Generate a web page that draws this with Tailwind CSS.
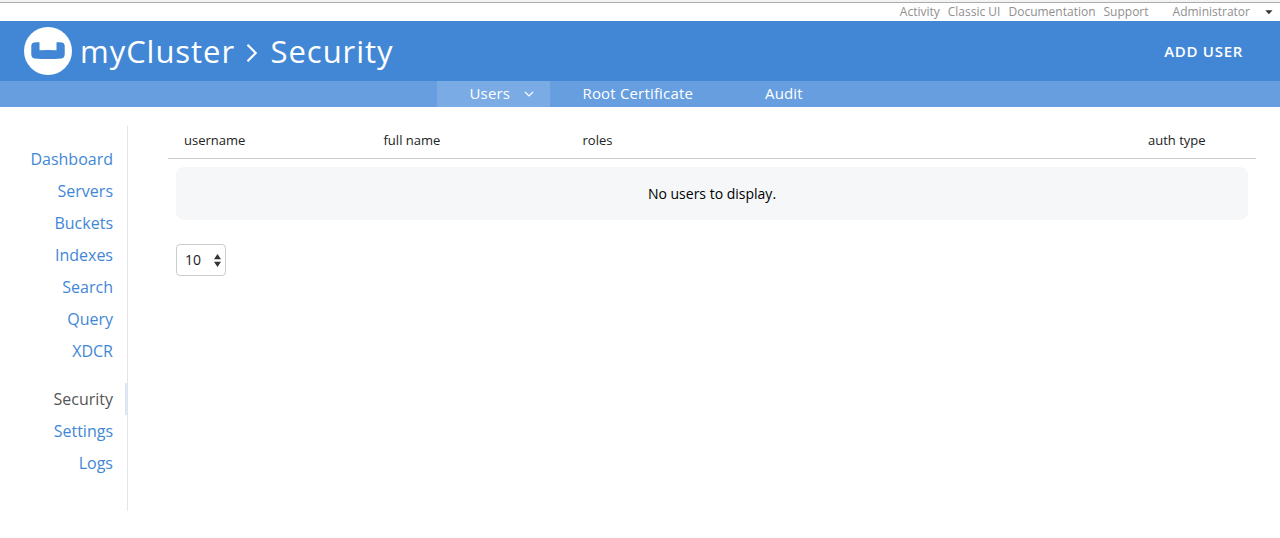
<!DOCTYPE html>
<html lang="en">
<head>
<meta charset="utf-8">
<title>myCluster - Security</title>
<script src="https://cdn.jsdelivr.net/npm/@tailwindcss/browser@4"></script>
</head>
<body class="h-[538px] overflow-hidden bg-white font-['Open_Sans','Noto_Sans',sans-serif] text-[#333]">
<div class="h-[3px] border-b border-[#aaadad] bg-[#f3f3f3]"></div>
<div class="flex h-[18px] items-center justify-end pr-[7px] text-xs leading-[18px] text-[#8f8f8f]">
  <nav class="flex gap-2"><a>Activity</a><a>Classic UI</a><a>Documentation</a><a>Support</a></nav>
  <a class="ml-6">Administrator</a>
  <svg class="ml-[15px] h-[5px] w-2" viewBox="0 0 8 5"><path d="M.3 .2h7.200L3.900 4.300z" fill="#333"/></svg>
</div>
<header class="flex h-[60px] items-center bg-[#4287d6] pl-6 pr-[37px] text-white">
  <svg class="size-12 shrink-0" viewBox="0 0 48 48"><circle cx="24" cy="24" r="24" fill="#fff"/><path d="M9.800 15.500Q12.500 15 15.500 15.300V23.200Q24 22.600 32.500 23.200V15.300Q35.500 15 38.200 15.500Q40.500 16 40.700 18.500V27.500Q40.500 30.800 37.500 31.500Q24 32.500 10.500 31.500Q7.500 30.800 7.300 27.500V18.500Q7.500 16 9.800 15.500Z" fill="#4287d6"/></svg>
  <h1 class="ml-2 flex items-center text-[31px] font-normal leading-[60px] tracking-[0.95px]"><span>myCluster</span>
    <svg class="ml-[11px] mr-[12.500px] mt-[3px] h-5 w-3" viewBox="0 0 12 20" fill="none" stroke="#fff" stroke-width="2.200"><path d="M1.500 1.800 9.700 10l-8.200 8.200"/></svg>
    <span>Security</span></h1>
  <button class="ml-auto text-[15px] font-semibold tracking-[0.7px]">ADD USER</button>
</header>
<nav class="flex h-[26px] bg-[#679edf] pl-[437px] text-[15px] leading-[24px] tracking-[0.17px] text-white">
  <a class="flex w-[113px] bg-[#7aabe4] pl-[32.500px]"><span>Users</span><svg class="ml-[14px] mt-[10px] h-[6px] w-[10px]" viewBox="0 0 10 6" fill="none" stroke="#fff" stroke-width="1.200"><path d="M1 1l4 4 4-4"/></svg></a>
  <a class="w-[182px] pl-[32.500px]">Root Certificate</a>
  <a class="pl-[33px]">Audit</a>
</nav>
<div class="flex pt-[19px]">
  <aside class="flex h-[385px] w-32 flex-col border-r border-[#e6e6e8] pt-[17px] text-right text-base leading-8 text-[#4287d6]">
    <a class="pr-[14px]">Dashboard</a>
    <a class="pr-[14px]">Servers</a>
    <a class="pr-[14px]">Buckets</a>
    <a class="pr-[14px]">Indexes</a>
    <a class="pr-[14px]">Search</a>
    <a class="pr-[14px]">Query</a>
    <a class="pr-[14px]">XDCR</a>
    <a class="mt-4 border-r-2 border-[#d9e7f7] pr-3 text-[#555]">Security</a>
    <a class="pr-[14px]">Settings</a>
    <a class="pr-[14px]">Logs</a>
  </aside>
  <main class="ml-10 w-[1088px]">
    <div class="flex h-[33px] border-b border-[#ccc] pl-4 text-[13px] leading-[29px] text-[#222]">
      <div class="w-[199.500px]">username</div><div class="w-[199px]">full name</div><div class="w-[565.500px]">roles</div><div>auth type</div>
    </div>
    <div class="mx-2 mt-2 h-[53px] rounded-lg bg-[#f5f7f9] text-center text-sm leading-[54px] text-black">No users to display.</div>
    <div class="ml-2 mt-6 flex h-8 w-[50px] items-center justify-between rounded border border-[#ccc] pl-2 pr-1 text-sm text-[#222]">
      <span>10</span>
      <svg class="h-[13px] w-[7px]" viewBox="0 0 7 13" fill="#333"><path d="M3.500 0 7 5.300H0zM0 7.700h7L3.500 13z"/></svg>
    </div>
  </main>
</div>
</body>
</html>
